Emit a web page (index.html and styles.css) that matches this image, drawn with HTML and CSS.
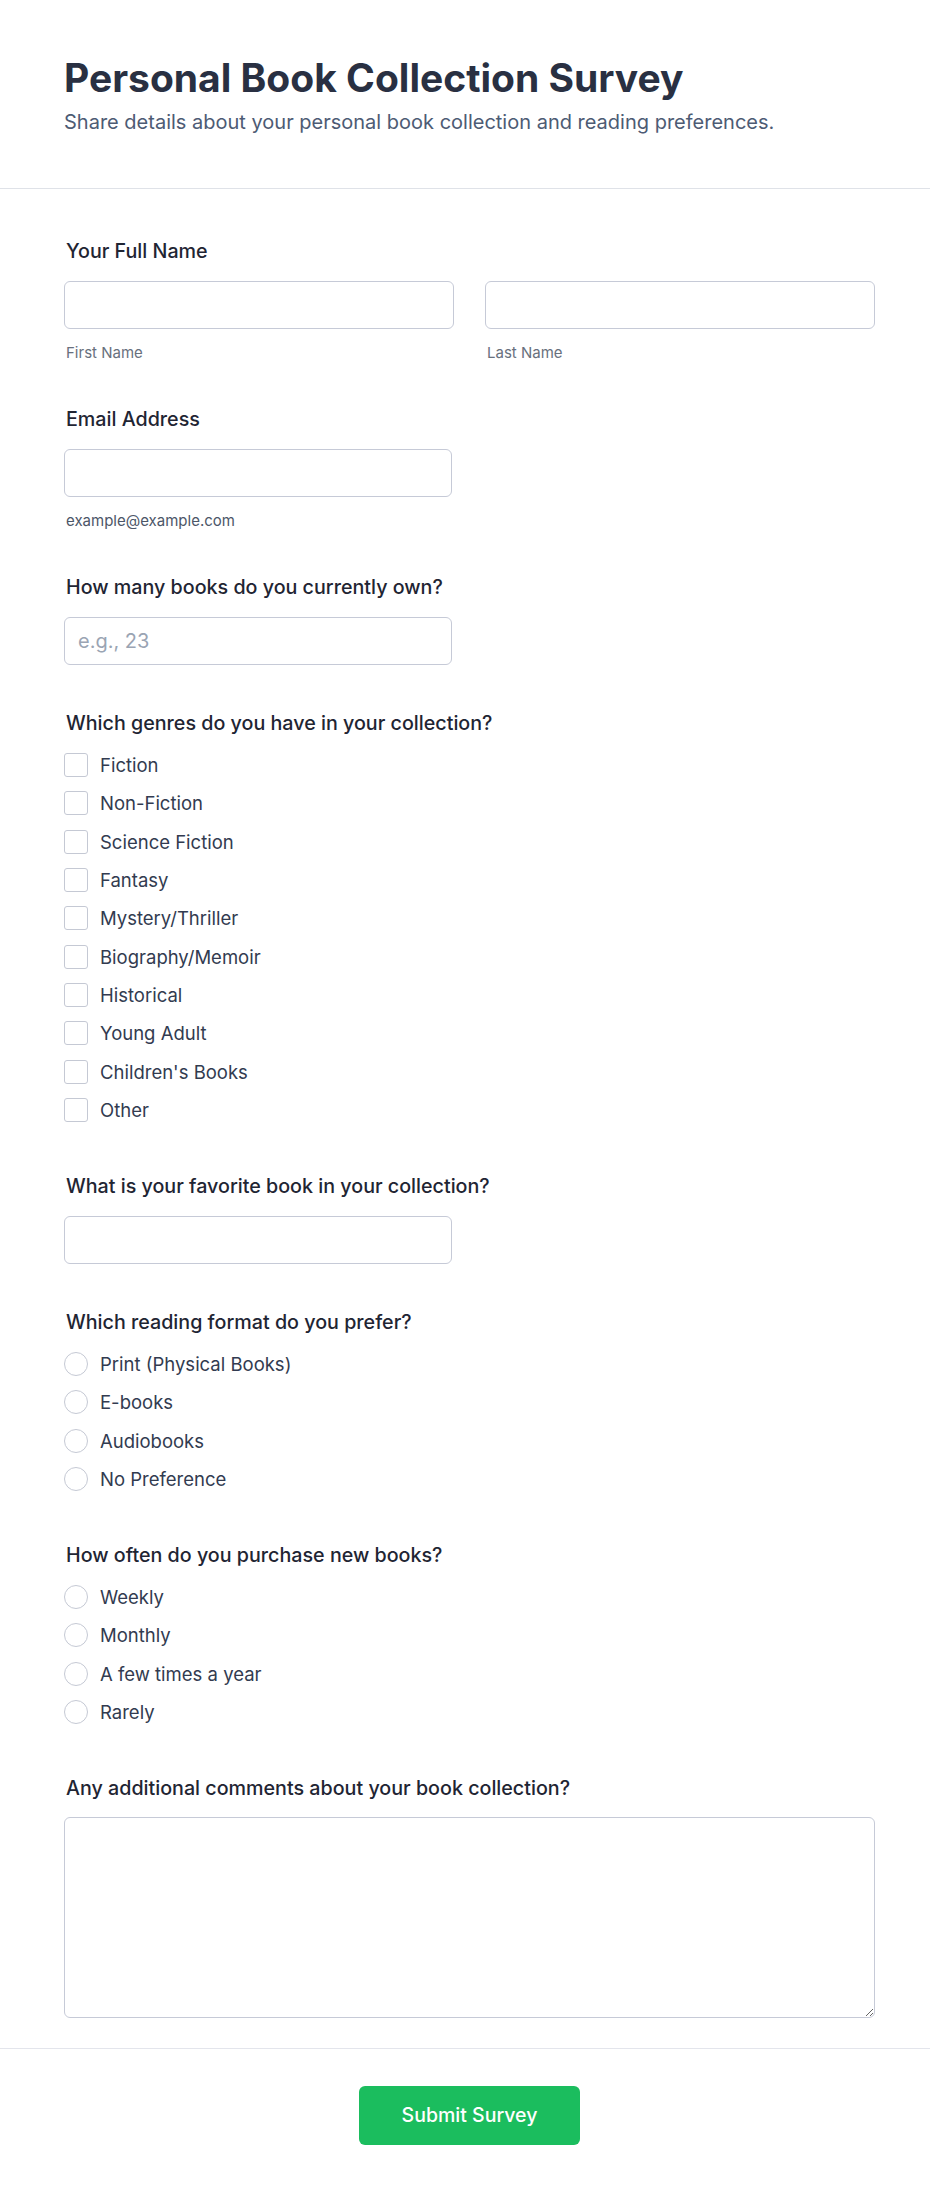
FILE: index.html
```html
<!DOCTYPE html>
<html lang="en">
<head>
<meta charset="utf-8">
<title>Personal Book Collection Survey</title>
<link rel="stylesheet" href="styles.css">
</head>
<body>
<div class="page">
  <header class="header">
    <h1 class="title">Personal Book Collection Survey</h1>
    <p class="subtitle">Share details about your personal book collection and reading preferences.</p>
  </header>
  <form class="form">
    <div class="body">
      <div class="field">
        <label class="label">Your Full Name</label>
        <div class="name-row">
          <div class="col">
            <input class="input" type="text">
            <span class="hint">First Name</span>
          </div>
          <div class="col">
            <input class="input" type="text">
            <span class="hint">Last Name</span>
          </div>
        </div>
      </div>

      <div class="field">
        <label class="label">Email Address</label>
        <input class="input input-half" type="email">
        <span class="hint hint-dark">example@example.com</span>
      </div>

      <div class="field">
        <label class="label">How many books do you currently own?</label>
        <input class="input input-half" type="text" placeholder="e.g., 23">
      </div>

      <div class="field field-options">
        <label class="label">Which genres do you have in your collection?</label>
        <div class="options">
          <label class="option"><input class="check" type="checkbox"><span>Fiction</span></label>
          <label class="option"><input class="check" type="checkbox"><span>Non-Fiction</span></label>
          <label class="option"><input class="check" type="checkbox"><span>Science Fiction</span></label>
          <label class="option"><input class="check" type="checkbox"><span>Fantasy</span></label>
          <label class="option"><input class="check" type="checkbox"><span>Mystery/Thriller</span></label>
          <label class="option"><input class="check" type="checkbox"><span>Biography/Memoir</span></label>
          <label class="option"><input class="check" type="checkbox"><span>Historical</span></label>
          <label class="option"><input class="check" type="checkbox"><span>Young Adult</span></label>
          <label class="option"><input class="check" type="checkbox"><span>Children's Books</span></label>
          <label class="option"><input class="check" type="checkbox"><span>Other</span></label>
        </div>
      </div>

      <div class="field">
        <label class="label">What is your favorite book in your collection?</label>
        <input class="input input-half" type="text">
      </div>

      <div class="field field-options">
        <label class="label">Which reading format do you prefer?</label>
        <div class="options">
          <label class="option"><input class="radio" type="radio" name="format"><span>Print (Physical Books)</span></label>
          <label class="option"><input class="radio" type="radio" name="format"><span>E-books</span></label>
          <label class="option"><input class="radio" type="radio" name="format"><span>Audiobooks</span></label>
          <label class="option"><input class="radio" type="radio" name="format"><span>No Preference</span></label>
        </div>
      </div>

      <div class="field field-options">
        <label class="label">How often do you purchase new books?</label>
        <div class="options">
          <label class="option"><input class="radio" type="radio" name="often"><span>Weekly</span></label>
          <label class="option"><input class="radio" type="radio" name="often"><span>Monthly</span></label>
          <label class="option"><input class="radio" type="radio" name="often"><span>A few times a year</span></label>
          <label class="option"><input class="radio" type="radio" name="often"><span>Rarely</span></label>
        </div>
      </div>

      <div class="field field-last">
        <label class="label label-tight">Any additional comments about your book collection?</label>
        <textarea class="textarea"></textarea>
      </div>
    </div>
    <div class="footer">
      <button class="submit" type="button">Submit Survey</button>
    </div>
  </form>
</div>
</body>
</html>
```

FILE: styles.css
```css
* {
  box-sizing: border-box;
}

html, body {
  margin: 0;
  padding: 0;
  background: #ffffff;
}

body {
  font-family: Inter, "Noto Sans", "Liberation Sans", sans-serif;
  color: #1f2533;
}

.page {
  width: 100%;
}

.header {
  padding: 54px 55px 52px 64px;
  border-bottom: 1px solid #dfe2e8;
}

.title {
  margin: 0;
  font-size: 39px;
  line-height: 47px;
  font-weight: 700;
  color: #293042;
}

.subtitle {
  margin: 7px 0 0 0;
  font-size: 20px;
  line-height: 28px;
  color: #4d5b74;
}

.form {
  margin: 0;
}

.body {
  padding: 48px 55px 30px 64px;
}

.field {
  display: flex;
  flex-direction: column;
  margin-bottom: 44px;
}

.field-options {
  margin-bottom: 50px;
}

.field-last {
  margin-bottom: 0;
}

.label {
  display: block;
  padding-left: 2px;
  margin-bottom: 16px;
  font-size: 19.7px;
  line-height: 28px;
  font-weight: 500;
  color: #1f2533;
}

.label-tight {
  margin-bottom: 15px;
}

.name-row {
  display: grid;
  grid-template-columns: 1fr 1fr;
  column-gap: 31px;
}

.col {
  display: flex;
  flex-direction: column;
}

.input {
  display: block;
  width: 100%;
  height: 48px;
  margin: 0;
  padding: 0 13px;
  border: 1px solid #c6cad7;
  border-radius: 6px;
  background: #ffffff;
  font-family: inherit;
  font-size: 20px;
  color: #1f2533;
  outline: none;
}

.input::placeholder {
  color: #9aa4b3;
}

.input-half {
  width: 388px;
}

.hint {
  display: block;
  margin-top: 16px;
  padding-left: 2px;
  font-size: 15px;
  line-height: 16px;
  color: #68707d;
}

.hint-dark {
  color: #4c5668;
}

.options {
  display: flex;
  flex-direction: column;
  gap: 14.33px;
}

.option {
  display: flex;
  align-items: center;
  gap: 12px;
  min-height: 24px;
  font-size: 18.5px;
  line-height: 24px;
  color: #323b50;
}

.check,
.radio {
  -webkit-appearance: none;
  appearance: none;
  flex: 0 0 auto;
  width: 24px;
  height: 24px;
  margin: 0;
  border: 1px solid #c5c9d4;
  background: #ffffff;
}

.check {
  border-radius: 3px;
}

.radio {
  border-radius: 50%;
}

.textarea {
  display: block;
  width: 100%;
  height: 201px;
  margin: 0;
  padding: 12px 13px;
  border: 1px solid #c6cad7;
  border-radius: 6px;
  background: #ffffff;
  font-family: inherit;
  font-size: 20px;
  color: #1f2533;
  resize: vertical;
  outline: none;
}

.footer {
  display: flex;
  justify-content: center;
  padding: 37px 55px 50px 64px;
  border-top: 1px solid #e3e5ec;
}

.submit {
  height: 59px;
  padding: 0 43px;
  border: none;
  border-radius: 6px;
  background: #1bbd5e;
  color: #ffffff;
  font-family: inherit;
  font-size: 19.5px;
  font-weight: 500;
  cursor: pointer;
}
```
